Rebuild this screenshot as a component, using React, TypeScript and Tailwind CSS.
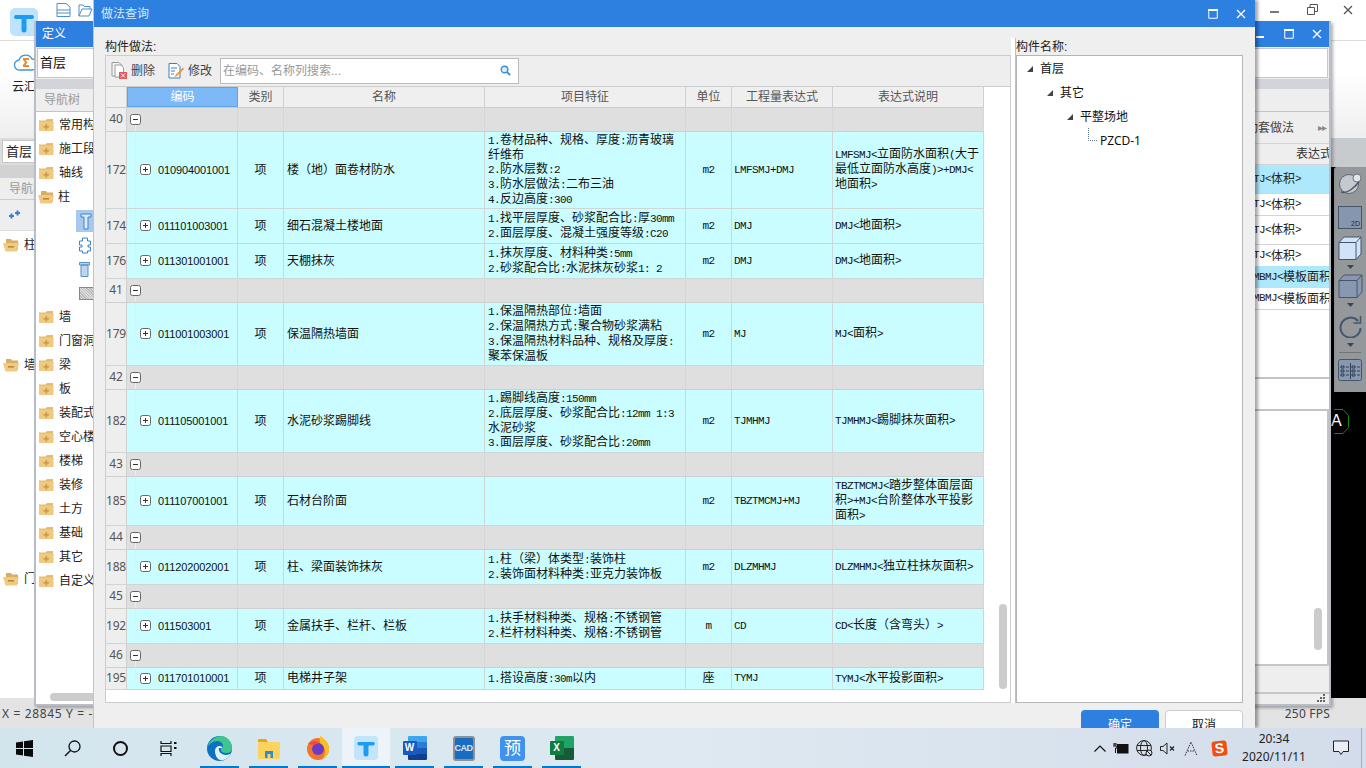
import React from "react";

const Mixed = ({ t }: { t: string }) => (
  <>
    {t.split(/([\x20-\x7e]+)/).map((p, i) =>
      /^[\x20-\x7e]+$/.test(p) ? (
        <span key={i} className="font-['Liberation_Mono',monospace] text-[11px] tracking-[-0.6px]">{p}</span>
      ) : (
        <React.Fragment key={i}>{p}</React.Fragment>
      )
    )}
  </>
);

const Folder = ({ open }: { open?: boolean }) =>
  open ? (
    <svg width="17" height="14" viewBox="0 0 17 14" className="shrink-0">
      <path d="M3 1h5l1 1.500h6V12H3z" fill="#d8ae62" />
      <path d="M0 5h13l3 0-2 8.500H2.500z" fill="#f0ca80" />
      <rect x="5" y="8" width="6" height="1.600" fill="#b58a3f" />
    </svg>
  ) : (
    <svg width="15" height="14" viewBox="0 0 15 14" className="shrink-0">
      <path d="M0 2.500h6.500L8 1h6v3H0z" fill="#e3bc73" />
      <rect x="0" y="3.500" width="14.500" height="9.500" rx="0.500" fill="#f0ca80" />
      <path d="M6.500 6h1.600v2h2v1.500h-2v2H6.500v-2h-2V8h2z" fill="#c49a4e" />
    </svg>
  );

const BoxIcon = ({ plus }: { plus?: boolean }) => (
  <svg width="11" height="11" viewBox="0 0 11 11" className="shrink-0">
    <rect x="0.500" y="0.500" width="10" height="10" rx="2" fill="#fff" stroke="#666" />
    <path d={plus ? "M3 5.500h5M5.500 3v5" : "M3 5.500h5"} stroke="#333" fill="none" />
  </svg>
);

type Row =
  | { g: number; h: string }
  | { n: number; h: string; code: string; name: string; feat: string[]; unit: string; expr: string; desc: string[]; cont?: boolean };

const rows: Row[] = [
  { g: 40, h: "h-[24px]" },
  { n: 172, h: "h-[77px]", cont: true, code: "010904001001", name: "楼（地）面卷材防水", feat: ["1.卷材品种、规格、厚度:沥青玻璃", "纤维布", "2.防水层数:2", "3.防水层做法:二布三油", "4.反边高度:300"], unit: "m2", expr: "LMFSMJ+DMJ", desc: ["LMFSMJ<立面防水面积(大于", "最低立面防水高度)>+DMJ<", "地面积>"] },
  { n: 174, h: "h-[35px]", cont: true, code: "011101003001", name: "细石混凝土楼地面", feat: ["1.找平层厚度、砂浆配合比:厚30mm", "2.面层厚度、混凝土强度等级:C20"], unit: "m2", expr: "DMJ", desc: ["DMJ<地面积>"] },
  { n: 176, h: "h-[35px]", code: "011301001001", name: "天棚抹灰", feat: ["1.抹灰厚度、材料种类:5mm", "2.砂浆配合比:水泥抹灰砂浆1: 2"], unit: "m2", expr: "DMJ", desc: ["DMJ<地面积>"] },
  { g: 41, h: "h-[24px]" },
  { n: 179, h: "h-[63px]", code: "011001003001", name: "保温隔热墙面", feat: ["1.保温隔热部位:墙面", "2.保温隔热方式:聚合物砂浆满粘", "3.保温隔热材料品种、规格及厚度:", "聚苯保温板"], unit: "m2", expr: "MJ", desc: ["MJ<面积>"] },
  { g: 42, h: "h-[24px]" },
  { n: 182, h: "h-[63px]", code: "011105001001", name: "水泥砂浆踢脚线", feat: ["1.踢脚线高度:150mm", "2.底层厚度、砂浆配合比:12mm 1:3", "水泥砂浆", "3.面层厚度、砂浆配合比:20mm"], unit: "m2", expr: "TJMHMJ", desc: ["TJMHMJ<踢脚抹灰面积>"] },
  { g: 43, h: "h-[24px]" },
  { n: 185, h: "h-[49px]", code: "011107001001", name: "石材台阶面", feat: [], unit: "m2", expr: "TBZTMCMJ+MJ", desc: ["TBZTMCMJ<踏步整体面层面", "积>+MJ<台阶整体水平投影", "面积>"] },
  { g: 44, h: "h-[24px]" },
  { n: 188, h: "h-[35px]", code: "011202002001", name: "柱、梁面装饰抹灰", feat: ["1.柱（梁）体类型:装饰柱", "2.装饰面材料种类:亚克力装饰板"], unit: "m2", expr: "DLZMHMJ", desc: ["DLZMHMJ<独立柱抹灰面积>"] },
  { g: 45, h: "h-[24px]" },
  { n: 192, h: "h-[35px]", code: "011503001", name: "金属扶手、栏杆、栏板", feat: ["1.扶手材料种类、规格:不锈钢管", "2.栏杆材料种类、规格:不锈钢管"], unit: "m", expr: "CD", desc: ["CD<长度（含弯头）>"] },
  { g: 46, h: "h-[24px]" },
  { n: 195, h: "h-[22px]", code: "011701010001", name: "电梯井子架", feat: ["1.搭设高度:30m以内"], unit: "座", expr: "TYMJ", desc: ["TYMJ<水平投影面积>"] },
];

const GRID = "grid w-[878px] grid-cols-[21px_111px_46px_201px_201px_46px_101px_151px]";

const TableRow = ({ r }: { r: Row }) => {
  if ("g" in r) {
    return (
      <div className={`${GRID} ${r.h} bg-[#dfdfdf] border-b border-[#cfcfcf]`}>
        <div className="bg-[#eeeeee] border-r border-[#cfcfcf] flex items-center justify-center font-['Noto_Sans',sans-serif] text-[12px] text-[#555] leading-none">{r.g}</div>
        <div className="border-r border-[#d6d6d6] flex items-center pl-[3px] relative">
          <BoxIcon />
          <span className="absolute left-[8px] bottom-0 h-[6px] w-px bg-[#ececec]" />
        </div>
        <div className="border-r border-[#d6d6d6]" />
        <div className="border-r border-[#d6d6d6]" />
        <div className="border-r border-[#d6d6d6]" />
        <div className="border-r border-[#d6d6d6]" />
        <div className="border-r border-[#d6d6d6]" />
        <div className="border-r border-[#d6d6d6]" />
      </div>
    );
  }
  return (
    <div className={`${GRID} ${r.h} bg-[#c9fdff] border-b border-[#cfd6d6] text-[12px] leading-[14px] text-[#111]`}>
      <div className="bg-[#eeeeee] border-r border-[#cfcfcf] flex items-center justify-center font-['Noto_Sans',sans-serif] text-[#555] leading-none tracking-[-0.2px]">{r.n}</div>
      <div className="border-r border-[#cfd6d6] flex items-center pl-[13px] relative">
        <span className={`absolute left-[8px] top-0 w-px bg-[#dfeeee] ${r.cont ? "bottom-0" : "h-1/2"}`} />
        <span className="absolute left-[8px] top-1/2 w-[5px] h-px bg-[#dfeeee]" />
        <BoxIcon plus />
        <span className="ml-[7px] font-['Liberation_Sans',sans-serif] text-[11px] tracking-[-0.12px]">{r.code}</span>
      </div>
      <div className="border-r border-[#cfd6d6] flex items-center justify-center">项</div>
      <div className="border-r border-[#cfd6d6] flex items-center pl-[3px] whitespace-nowrap">{r.name}</div>
      <div className="border-r border-[#cfd6d6] flex flex-col justify-center pl-[3px] whitespace-nowrap">
        {r.feat.map((l, i) => (
          <div key={i}><Mixed t={l} /></div>
        ))}
      </div>
      <div className="border-r border-[#cfd6d6] flex items-center justify-center"><Mixed t={r.unit} /></div>
      <div className="border-r border-[#cfd6d6] flex items-center pl-[2px] whitespace-nowrap"><Mixed t={r.expr} /></div>
      <div className="border-r border-[#cfd6d6] flex flex-col justify-center pl-[2px] whitespace-nowrap overflow-hidden">
        {r.desc.map((l, i) => (
          <div key={i}><Mixed t={l} /></div>
        ))}
      </div>
    </div>
  );
};

const HeaderCell = ({ t, active }: { t: string; active?: boolean }) => (
  <div className={active ? "bg-[#7db8f7] border border-[#5da3ee] text-white flex items-center justify-center" : "border-r border-[#cfcfcf] text-[#555] flex items-center justify-center"}>{t}</div>
);

const WinMax = ({ c = "white" }: { c?: string }) => (
  <svg width="10" height="10" viewBox="0 0 10 10"><path d="M.75.75h8.500v8.500H.75z" fill="none" stroke={c} strokeWidth="1" /><path d="M0 1h10" stroke={c} strokeWidth="2" /></svg>
);
const WinClose = ({ c = "white" }: { c?: string }) => (
  <svg width="10" height="10" viewBox="0 0 10 10"><path d="M1 1l8 8M9 1l-8 8" stroke={c} strokeWidth="1.300" fill="none" /></svg>
);

const TreeArrow = () => (
  <svg width="6" height="6" viewBox="0 0 6 6" className="shrink-0"><path d="M6 0v6H0z" fill="#444" /></svg>
);

const Dialog = () => (
  <div className="absolute left-[93px] top-0 w-[1162px] h-[728px] bg-[#efefef] shadow-[3px_0_3px_rgba(0,0,0,0.35)] border-l border-[#c4c4c4] z-20">
    <div className="h-full overflow-hidden flex flex-col">
      <div className="h-[27px] shrink-0 bg-[#2d7fe0] flex items-center pl-[7px] pr-[9px] text-[#d8e8fa] text-[12px]">
        <span>做法查询</span>
        <span className="ml-auto mr-[18px] flex"><WinMax /></span>
        <WinClose />
      </div>
      <div className="h-[676px] shrink-0 flex pl-[11px]">
        <div className="w-[906px] flex flex-col">
          <div className="h-[28px] text-[12px] text-[#222] flex items-end leading-[14px] pb-[1px]">构件做法:</div>
          <div className="h-[32px] shrink-0 bg-[#eeeeee] border-t border-b border-l border-r border-[#cccccc] flex items-center pl-[5px] text-[12px] text-[#444]">
            <svg width="16" height="17" viewBox="0 0 16 17" className="shrink-0">
              <path d="M1 .5h7l3 3V14H1z" fill="#f4f4f4" stroke="#9a9a9a" />
              <path d="M4 3h6l2.500 2.500V15H4z" fill="#fff" stroke="#9a9a9a" />
              <rect x="8" y="10" width="8" height="7" fill="#e25b5b" />
              <path d="M10 11.500l4 4M14 11.500l-4 4" stroke="#fff" />
            </svg>
            <span className="ml-[4px] w-[37px]">删除</span>
            <svg width="16" height="16" viewBox="0 0 16 16" className="shrink-0">
              <path d="M1 .5h8l3 3V15H1z" fill="#fff" stroke="#3f7fc4" />
              <path d="M3 5h6M3 8h4M3 11h3" stroke="#3f7fc4" />
              <path d="M15 4.500L8 11.500l-2 2.500 3-1 7-7z" fill="#f0912c" />
            </svg>
            <span className="ml-[4px] w-[32px]">修改</span>
            <div className="w-[299px] h-[26px] bg-white border border-[#bbbbbb] flex items-center pl-[2px] pr-[7px] text-[#999]">
              <span>在编码、名称列搜索...</span>
              <svg width="11" height="11" viewBox="0 0 11 11" className="ml-auto">
                <circle cx="4.500" cy="4.500" r="3.300" fill="#d6ecf8" stroke="#3a8fd0" strokeWidth="1.400" />
                <path d="M7 7l3.200 3.200" stroke="#3a8fd0" strokeWidth="1.800" />
              </svg>
            </div>
          </div>
          <div className="relative h-[617px] bg-white border-l border-r border-b border-[#cccccc] overflow-hidden">
            <div className={`${GRID} h-[21px] bg-[#efefef] border-b border-[#cccccc] text-[12px]`}>
              <div className="border-r border-[#cfcfcf]" />
              <HeaderCell t="编码" active />
              <HeaderCell t="类别" />
              <HeaderCell t="名称" />
              <HeaderCell t="项目特征" />
              <HeaderCell t="单位" />
              <HeaderCell t="工程量表达式" />
              <HeaderCell t="表达式说明" />
            </div>
            {rows.map((r, i) => (
              <TableRow key={i} r={r} />
            ))}
            <div className="absolute left-[893px] top-[517px] w-[8px] h-[85px] rounded-full bg-[#cccccc]" />
          </div>
        </div>
        <div className="w-[5px] mt-[11px] bg-white border-r border-l-0 border-[#c0c0c0]" />
        <div className="w-[227px] flex flex-col">
          <div className="h-[28px] text-[12px] text-[#222] flex items-end leading-[14px] pb-[1px]">构件名称:</div>
          <div className="flex-1 bg-white border border-[#b5b5b5] text-[12px] text-[#111] pl-[10px] pt-[1px]">
            <div className="h-[24px] flex items-center"><TreeArrow /><span className="ml-[7px]">首层</span></div>
            <div className="h-[24px] flex items-center pl-[20px]"><TreeArrow /><span className="ml-[7px]">其它</span></div>
            <div className="h-[24px] flex items-center pl-[40px]"><TreeArrow /><span className="ml-[7px]">平整场地</span></div>
            <div className="h-[24px] flex items-center pl-[61px] relative">
              <svg width="9" height="14" viewBox="0 0 9 14" className="absolute left-[61px] -top-[1px]"><path d="M.5 0v12.500H9" fill="none" stroke="#5f7690" strokeDasharray="1 1" /></svg>
              <span className="ml-[12px] font-['Noto_Sans',sans-serif]">PZCD-1</span>
            </div>
          </div>
        </div>
      </div>
      <div className="flex justify-end gap-[6px] pt-[7px] pr-[12px] text-[12px]">
        <div className="w-[78px] h-[30px] rounded-[4px] bg-[#2d7fe0] text-white flex items-center justify-center">确定</div>
        <div className="w-[78px] h-[30px] rounded-[4px] bg-white border border-[#cccccc] text-[#222] flex items-center justify-center">取消</div>
      </div>
    </div>
  </div>
);

const navItems: [string, boolean?][] = [["常用构件"], ["施工段"], ["轴线"], ["柱", true]];
const navItems2 = ["墙", "门窗洞口", "梁", "板", "装配式", "空心楼盖", "楼梯", "装修", "土方", "基础", "其它", "自定义"];

const NavRow = ({ t, open }: { t: string; open?: boolean }) => (
  <div className="h-[24px] flex items-center pl-[3px] whitespace-nowrap">
    <span className={open ? "w-[20px] -ml-[1px]" : "w-[20px]"}><Folder open={open} /></span>
    <span>{t}</span>
  </div>
);

const DefWindow = () => (
  <div className="absolute left-[34px] top-[21px] w-[1297px] h-[685px] bg-[#eeeeee] border-l-2 border-[#b9bdc6] border-r-2 border-b-2 shadow-[2px_2px_3px_rgba(0,0,0,0.3)] z-10 flex flex-col">
    <div className="h-[26px] shrink-0 bg-[#2d7fe0] flex items-center pl-[6px] pr-[7px] text-white text-[12px]">
      <span>定义</span>
      <span className="ml-auto w-[8px] h-[2px] bg-white mr-[20px] mt-[6px]" />
      <span className="mr-[18px] flex"><WinMax /></span>
      <WinClose />
    </div>
    <div className="h-[32px] shrink-0 pt-[1px] px-[1px]">
      <div className="h-[30px] bg-white border border-[#c4c7cc] pl-[2px] flex items-center text-[13px] text-[#111]">首层</div>
    </div>
    <div className="h-[10px] shrink-0 bg-[#d2d4da]" />
    <div className="h-[23px] shrink-0 bg-[#eeeeee] border-b border-[#c4c4c4] pl-[8px] flex items-center text-[12px] text-[#999]">导航树</div>
    <div className="flex-1 flex min-h-0 text-[12px] text-[#222]">
      <div className="relative w-[120px] bg-white pt-[1px]">
        {navItems.map(([t, o]) => (
          <NavRow key={t} t={t} open={o} />
        ))}
        <div className="h-[24px] flex items-center pl-[40px]">
          <div className="w-[20px] h-[22px] bg-[#a9c8ee] flex items-center justify-center">
            <svg width="12" height="17" viewBox="0 0 12 17"><path d="M1 1h10v3H8v12H4V4H1z" fill="#d8ecfb" stroke="#3f82c8" /></svg>
          </div>
        </div>
        <div className="h-[24px] flex items-center pl-[43px]">
          <svg width="12" height="17" viewBox="0 0 12 17"><path d="M3.500 1h5v3h3v4H9v2h2.500v4h-3v2h-5v-2h-3v-4H3V8H.5V4h3z" fill="#fff" stroke="#3f82c8" /></svg>
        </div>
        <div className="h-[24px] flex items-center pl-[43px]">
          <svg width="11" height="15" viewBox="0 0 11 15"><path d="M.5.5h10v2.500H.5zM2 3h7v11.500H2z" fill="#bcd6ee" stroke="#5a8fc4" /></svg>
        </div>
        <div className="h-[24px] flex items-center pl-[43px]">
          <div className="w-[16px] h-[13px] border border-[#5a8fd8] bg-[repeating-linear-gradient(45deg,#bbbbbb,#bbbbbb_1px,#dddddd_1px,#dddddd_2px)]" />
        </div>
        {navItems2.map((t) => (
          <NavRow key={t} t={t} />
        ))}
        <div className="absolute left-[14px] right-0 bottom-[3px] h-[8px] rounded-full bg-[#cccccc]" />
      </div>
      <div className="flex-1" />
      <div className="w-[76px] flex flex-col bg-white overflow-hidden">
        <div className="h-[31px] shrink-0 bg-[#eeeeee] flex items-center justify-end pr-[3px]">
          <span className="whitespace-nowrap text-[#444]">自动套做法</span>
          <span className="ml-[24px] text-[10px] text-[#888] tracking-[-1px]">▸▸</span>
        </div>
        <div className="h-[22px] shrink-0 bg-[#eeeeee] border-y border-[#d4d4d4] pl-[43px] flex items-center whitespace-nowrap text-[#333]">表达式说明</div>
        <div className="h-[28px] shrink-0 bg-[#aee8fc] flex items-center whitespace-nowrap"><Mixed t="TJ<体积>" /></div>
        <div className="h-[22px] shrink-0 border-t border-[#d4d4d4] flex items-center whitespace-nowrap"><Mixed t="TJ<体积>" /></div>
        <div className="h-[29px] shrink-0 border-t border-[#d4d4d4] flex items-center whitespace-nowrap"><Mixed t="TJ<体积>" /></div>
        <div className="h-[22px] shrink-0 border-t border-[#d4d4d4] flex items-center whitespace-nowrap"><Mixed t="TJ<体积>" /></div>
        <div className="h-[22px] shrink-0 bg-[#aee8fc] flex items-center whitespace-nowrap"><Mixed t="MBMJ<模板面积>" /></div>
        <div className="h-[22px] shrink-0 border-b border-[#d4d4d4] flex items-center whitespace-nowrap"><Mixed t="MBMJ<模板面积>" /></div>
        <div className="h-[69px] shrink-0 border-b-2 border-[#c4c4c4]" />
        <div className="h-[32px] shrink-0 border-b-2 border-[#c4c4c4]" />
        <div className="flex-1 relative border-r-2 border-[#c4c4c4]">
          <div className="absolute right-[5px] top-[197px] w-[8px] h-[42px] rounded-full bg-[#cccccc]" />
        </div>
        <div className="h-[30px] shrink-0 bg-[#eeeeee] border-y-2 border-[#c4c7cc] " />
        <div className="h-[10px] shrink-0 bg-[#eeeeee] flex justify-end pr-[3px]">
          <svg width="9" height="9" viewBox="0 0 9 9"><path d="M6 0h2v2H6zM3 3h2v2H3zM6 3h2v2H6zM0 6h2v2H0zM3 6h2v2H3zM6 6h2v2H6z" fill="#666" /></svg>
        </div>
      </div>
    </div>
  </div>
);

const Tool3D = () => (
  <div className="w-[32px] h-[225px] ml-auto bg-[#95989b] rounded-tl-[3px] flex flex-col items-center pt-[5px] text-[#4a5568]">
    <svg width="26" height="24" viewBox="0 0 26 24" className="shrink-0">
      <circle cx="12" cy="12" r="9.500" fill="#c4c9d0" stroke="#5c6672" />
      <path d="M4 20c6 2 14-4 19-12" fill="none" stroke="#4a5568" strokeWidth="1.500" />
      <circle cx="20" cy="6" r="4" fill="#e2e6ea" stroke="#6a7480" />
    </svg>
    <div className="mt-[10px] shrink-0 w-[24px] h-[23px] bg-[#8696ad] border border-[#46566a] flex items-end justify-end pr-[1px] text-[7px] leading-[9px] text-[#1e2a38]">2D</div>
    <svg width="24" height="24" viewBox="0 0 24 24" className="mt-[7px] shrink-0"><path d="M1 6.500l5-5.500h17v17l-5 5.500H1z" fill="#cfe4f7" stroke="#46566a" /><path d="M1 6.500h17v17M18 6.500L23 1" fill="none" stroke="#46566a" /></svg>
    <span className="h-[14px] shrink-0 flex items-center"><svg width="7" height="4" viewBox="0 0 7 4"><path d="M0 0h7L3.500 4z" fill="#3b4452" /></svg></span>
    <svg width="25" height="24" viewBox="0 0 25 24" className="shrink-0"><path d="M1 6.500l5-5.500h18v17l-5 5.500H1z" fill="#8798b0" stroke="#46566a" /><path d="M1 6.500h18v17M19 6.500L24 1" fill="none" stroke="#46566a" /></svg>
    <span className="h-[14px] shrink-0 flex items-center"><svg width="7" height="4" viewBox="0 0 7 4"><path d="M0 0h7L3.500 4z" fill="#3b4452" /></svg></span>
    <svg width="24" height="24" viewBox="0 0 24 24" className="mt-[2px] shrink-0"><path d="M20 7a10 10 0 1 0 2.500 7" fill="none" stroke="#46566a" strokeWidth="2" /><path d="M22.500 2v7h-7" fill="none" stroke="#46566a" strokeWidth="1.500" /></svg>
    <span className="h-[14px] shrink-0 flex items-center"><svg width="7" height="4" viewBox="0 0 7 4"><path d="M0 0h7L3.500 4z" fill="#3b4452" /></svg></span>
    <div className="w-[22px] h-px shrink-0 bg-[#6f7478]" />
    <svg width="24" height="23" viewBox="0 0 24 23" className="mt-[5px] shrink-0">
      <rect x=".5" y="1.500" width="23" height="21" rx="2" fill="#8798b0" stroke="#46566a" />
      <path d="M3 8h3v2H3zM3 12h3v2H3zM3 16h3v2H3zM14 8h3v2h-3zM14 12h3v2h-3zM14 16h3v2h-3zM8 9h3M8 13h3M8 17h3M19 9h3M19 13h3M19 17h3M12.500 5v16" stroke="#1f2b3a" fill="none" strokeWidth="0.800" />
    </svg>
  </div>
);

const MainWindow = () => (
  <div className="h-[728px] flex flex-col bg-white font-['Liberation_Sans','Noto_Sans_CJK_SC',sans-serif]">
    <div className="h-[138px] shrink-0 flex flex-col text-[12px] text-[#222]">
      <div className="h-[41px] shrink-0 border-b border-[#dcdcdc] flex items-start pl-[10px]">
        <svg width="28" height="28" viewBox="0 0 28 28" className="mt-[8px] shrink-0">
          <rect width="28" height="28" rx="5" fill="#bfe3fb" />
          <path d="M6 7h16a1.500 1.500 0 0 1 0 4h-5.500v11a2.500 2.500 0 0 1-5 0V11H6a2 2 0 0 1 0-4z" fill="#1d9cf0" />
        </svg>
        <svg width="15" height="14" viewBox="0 0 15 14" className="ml-[18px] mt-[3px]"><path d="M1 .5h9l4 3.500v9.500H1zM1 7h13M1 10h13" fill="#fff" stroke="#4f8fce" /></svg>
        <svg width="15" height="14" viewBox="0 0 15 14" className="ml-[7px] mt-[3px]"><path d="M1 13V2h4l1.500 1.500H12V6M1 13h10l3-7H4z" fill="#fff" stroke="#4f8fce" /></svg>
        <div className="ml-auto flex items-center h-[20px] mt-0 pr-[13px] text-[#555]">
          <span className="w-[9px] h-[2px] bg-[#777] mt-[4px]" />
          <svg width="11" height="11" viewBox="0 0 11 11" className="ml-[28px] -mt-[2px]"><path d="M.5 3.500h7v7h-7zM3 3.500V.5h7.500v7h-3" fill="none" stroke="#555" /></svg>
          <span className="ml-[25px]"><WinClose c="#555" /></span>
        </div>
      </div>
      <div className="relative flex-1 bg-[linear-gradient(#ffffff_30%,#eeeeee)] pl-[14px] pt-[10px]">
        <svg width="22" height="22" viewBox="0 0 22 22"><path d="M6 19a5 5 0 0 1-1-10 7 7 0 0 1 13-1 5.500 5.500 0 0 1 0 11z" fill="#fff" stroke="#3d94dc" strokeWidth="1.300" /><path d="M9 7h6v2h-3.500l2 2.500-2 2.500H15v2H9v-2l2-2.500L9 9z" fill="#ee8a2c" /></svg>
        <div className="-ml-[2px] mt-[5px]">云汇</div>
      </div>
    </div>
    <div className="h-[560px] shrink-0 flex justify-between text-[12px] text-[#222]">
      <div className="w-[36px] flex flex-col bg-white border-r border-[#bbb] overflow-hidden whitespace-nowrap">
        <div className="h-[27px] shrink-0 bg-[#dddddd] pt-[2px] pl-[2px]">
          <div className="h-[23px] bg-white border border-[#c4c7cc] flex items-center pl-[3px] text-[13px]">首层</div>
        </div>
        <div className="h-[13px] shrink-0 bg-[#d2d2d2]" />
        <div className="h-[22px] shrink-0 bg-[#eeeeee] border-b border-[#ccc] pl-[9px] flex items-center text-[#999]">导航树</div>
        <div className="h-[31px] shrink-0 bg-[#eeeeee] border-b border-[#ddd] pl-[7px] flex items-center">
          <svg width="13" height="11" viewBox="0 0 13 11"><path d="M2 6h5M4.500 3.500v5M8 3h5M10.500 .5v5" stroke="#3d7fcf" strokeWidth="2" /></svg>
        </div>
        <div className="h-[120px] shrink-0 pt-[7px] pl-[3px] flex"><Folder open /><span className="ml-[4px] h-[14px] leading-[14px]">柱</span></div>
        <div className="h-[214px] shrink-0 pt-[7px] pl-[3px] flex"><Folder open /><span className="ml-[4px] h-[14px] leading-[14px]">墙</span></div>
        <div className="pt-[7px] pl-[3px] flex"><Folder open /><span className="ml-[4px] h-[14px] leading-[14px]">门</span></div>
      </div>
      <div className="w-[35px] flex flex-col bg-black">
        <div className="h-[29px] shrink-0 bg-[#c8cbce]" />
        <Tool3D />
        <div className="relative flex-1">
          <div className="absolute left-[-1px] top-[17px] w-[19px] h-[25px]">
            <svg width="19" height="25" viewBox="0 0 19 25" className="absolute inset-0"><path d="M4 .5l9-.0 5.500 6v12l-5.500 6H4" fill="none" stroke="#0c8a0c" /></svg>
            <span className="absolute left-[1px] top-[3px] text-[16px] leading-[18px] text-white font-['Liberation_Sans',sans-serif]">A</span>
          </div>
        </div>
      </div>
    </div>
    <div className="h-[30px] shrink-0 bg-[#e3e3e3] flex items-center justify-between pl-[2px] pr-[36px] pt-[1px] text-[12px] text-[#444] font-['Noto_Sans',sans-serif]">
      <span className="tracking-[0.65px]">X = 28845 Y = -</span>
      <span className="tracking-[0.2px]">250 FPS</span>
    </div>
  </div>
);

const TaskApp = ({ children, w = "w-[49px]" }: { children: React.ReactNode; w?: string }) => (
  <div className={`relative ${w} h-[40px] flex items-center justify-center`}>
    {children}
    <div className="absolute inset-x-[5px] bottom-0 h-[2px] bg-[#0078d4]" />
  </div>
);

const Taskbar = () => (
  <div className="absolute left-0 right-0 bottom-0 h-[40px] z-30 bg-[linear-gradient(90deg,#d2e5ed,#dfe9f1_50%,#d3dcea)] flex items-center font-['Liberation_Sans','Noto_Sans_CJK_SC',sans-serif]">
    <div className="w-[48px] flex justify-center">
      <svg width="17" height="17" viewBox="0 0 17 17"><path d="M0 2.500l7-1v6.500H0zM8 1.300l9-1.300v8H8zM0 9h7v6.500l-7-1zM8 9h9v8l-9-1.300z" fill="#0a0a0a" /></svg>
    </div>
    <div className="w-[48px] flex justify-center">
      <svg width="17" height="17" viewBox="0 0 17 17"><circle cx="10.500" cy="6.500" r="5.500" fill="none" stroke="#111" strokeWidth="1.300" /><path d="M6.500 10.500L1 16" stroke="#111" strokeWidth="1.500" /></svg>
    </div>
    <div className="w-[48px] flex justify-center">
      <div className="w-[15px] h-[15px] rounded-full border-[2.500px] border-[#111]" />
    </div>
    <div className="w-[48px] flex justify-center mr-[3px]">
      <svg width="17" height="15" viewBox="0 0 17 15"><path d="M1 0v2.500h10V0M1 15v-2.500h10V15M1 5h10v5.500H1z" fill="none" stroke="#111" strokeWidth="1.200" /><path d="M14 1h2.500v2H14zM14 6h2.500v2H14z" fill="#111" /></svg>
    </div>
    <TaskApp>
      <svg width="25" height="25" viewBox="0 0 25 25">
        <circle cx="12.500" cy="12.500" r="12.500" fill="#0f6fc0" />
        <path d="M1 10C3 3 10 0 15 0c6 1 10 6 10 12 0 3-2 5-6 5-3 0-5-1-5-3 0-3 2-2 2-4 0-3-3-5-6-5-4 0-7 3-9 5z" fill="#3fc58f" />
        <path d="M8 15c0-3 2-5 5-5 2 0 2 1 2 2h-3c-1 3 2 7 7 7 2 0 4-1 5-2-2 5-7 8-11 7-3-1-5-5-5-9z" fill="#dff1f7" />
      </svg>
    </TaskApp>
    <TaskApp>
      <svg width="22" height="21" viewBox="0 0 22 21">
        <path d="M0 2a1 1 0 0 1 1-1h7l2 3H0z" fill="#e6a717" />
        <rect x="0" y="4" width="22" height="17" rx="1" fill="#fcd35c" />
        <path d="M7 20v-7h8v7h-2.500v-4h-3v4z" fill="#2a8fd8" />
      </svg>
    </TaskApp>
    <TaskApp>
      <svg width="24" height="24" viewBox="0 0 24 24">
        <circle cx="12" cy="13" r="11" fill="#f3742b" />
        <path d="M14 0c4 2 8 6 9 11 1 6-3 11-7 12 4-4 4-10 0-14-1 1-3-4-2-9z" fill="#fbbf24" />
        <circle cx="12" cy="13" r="6" fill="#6a3cc2" />
        <path d="M2 8c3-3 8-4 11-1l-5 2z" fill="#f0483e" />
      </svg>
    </TaskApp>
    <div className="relative w-[48px] h-[40px] bg-[#ecf4f9] flex items-center justify-center">
      <svg width="24" height="24" viewBox="0 0 24 24">
        <rect width="24" height="24" rx="4" fill="#c2e5fb" />
        <path d="M5 6h14a1.500 1.500 0 0 1 0 3.500h-4.500V18a2.500 2.500 0 0 1-5 0V9.500H5A1.700 1.700 0 0 1 5 6z" fill="#1d9cf0" />
      </svg>
      <div className="absolute inset-x-0 bottom-0 h-[2px] bg-[#0078d4]" />
    </div>
    <TaskApp>
      <div className="relative w-[24px] h-[24px]">
        <div className="absolute right-0 top-0 w-[19px] h-[24px] rounded-[1px] bg-[linear-gradient(#41a5ee_25%,#2b7cd3_25%,#2b7cd3_50%,#185abd_50%,#185abd_75%,#103f91_75%)]" />
        <div className="absolute left-0 top-[5px] w-[14px] h-[14px] rounded-[1px] bg-[#185abd] text-white text-[10px] font-bold leading-[14px] text-center">W</div>
      </div>
    </TaskApp>
    <TaskApp>
      <div className="w-[22px] h-[25px] rounded-[3px] bg-[#1a6cc0] border-2 border-[#8c9097] text-[#d8e8f8] text-[9px] font-bold leading-[21px] text-center tracking-[-0.5px] overflow-hidden">CAD</div>
    </TaskApp>
    <TaskApp>
      <div className="w-[25px] h-[25px] rounded-[4px] bg-[#3f92ee] text-white text-[17px] leading-[25px] text-center">预</div>
    </TaskApp>
    <TaskApp>
      <div className="relative w-[24px] h-[24px]">
        <div className="absolute right-0 top-0 w-[19px] h-[24px] rounded-[1px] bg-[linear-gradient(#21a366_50%,#185c37_50%)]" />
        <div className="absolute left-0 top-[5px] w-[14px] h-[14px] rounded-[1px] bg-[#107c41] text-white text-[10px] font-bold leading-[14px] text-center">X</div>
      </div>
    </TaskApp>
    <div className="ml-auto flex items-center h-full">
      <svg width="12" height="7" viewBox="0 0 12 7"><path d="M.5 6.500L6 1l5.500 5.500" fill="none" stroke="#111" strokeWidth="1.200" /></svg>
      <svg width="16" height="11" viewBox="0 0 16 11" className="ml-[7px]"><path d="M0 1h4M2 0v3M0 3h4v2H2.500v5" fill="none" stroke="#111" /><rect x="4.500" y="1.500" width="10.500" height="8.500" fill="#111" stroke="#111" /></svg>
      <svg width="17" height="17" viewBox="0 0 17 17" className="ml-[7px]"><circle cx="8" cy="8" r="7.400" fill="none" stroke="#222" /><ellipse cx="8" cy="8" rx="3.500" ry="7.400" fill="none" stroke="#222" /><path d="M1 5.500h14M1 10.500h14" stroke="#222" /><circle cx="13" cy="13" r="3" fill="#d8dfe9" stroke="#222" /><path d="M11 11l4 4" stroke="#222" /></svg>
      <svg width="15" height="13" viewBox="0 0 15 13" className="ml-[7px]"><path d="M.5 4.500h2.500L7 1v11L3 8.500H.5z" fill="none" stroke="#222" /><path d="M10 4.500l4 4M14 4.500l-4 4" stroke="#222" strokeWidth="1.200" /></svg>
      <svg width="14" height="15" viewBox="0 0 14 15" className="ml-[9px]"><path d="M1 14.500L7 1l6 13.500M3.500 10h7" fill="none" stroke="#333" strokeDasharray="1.500 1" /></svg>
      <div className="ml-[14px] w-[15px] h-[15px] rounded-[3px] bg-[#f04e12] rotate-[-6deg] text-white font-bold text-[14px] leading-[15px] text-center">S</div>
      <div className="ml-[14px] w-[66px] flex flex-col items-center text-[12px] leading-[18px] text-[#222] font-['Noto_Sans',sans-serif]">
        <span>20:34</span>
        <span className="whitespace-nowrap">2020/11/11</span>
      </div>
      <svg width="16" height="16" viewBox="0 0 16 16" className="ml-[26px]"><path d="M.5 1h15v10.500H10l-2 3-2-3H.5z" fill="#fff" fillOpacity="0.5" stroke="#222" /></svg>
      <div className="ml-[12px] w-[5px] h-full border-l border-[#a8b0bc]" />
    </div>
  </div>
);

export default function App() {
  return (
    <div className="relative w-[1366px] h-[768px] overflow-hidden bg-[#dfe9f1] font-['Liberation_Sans','Noto_Sans_CJK_SC',sans-serif]">
      <MainWindow />
      <DefWindow />
      <Dialog />
      <Taskbar />
    </div>
  );
}
